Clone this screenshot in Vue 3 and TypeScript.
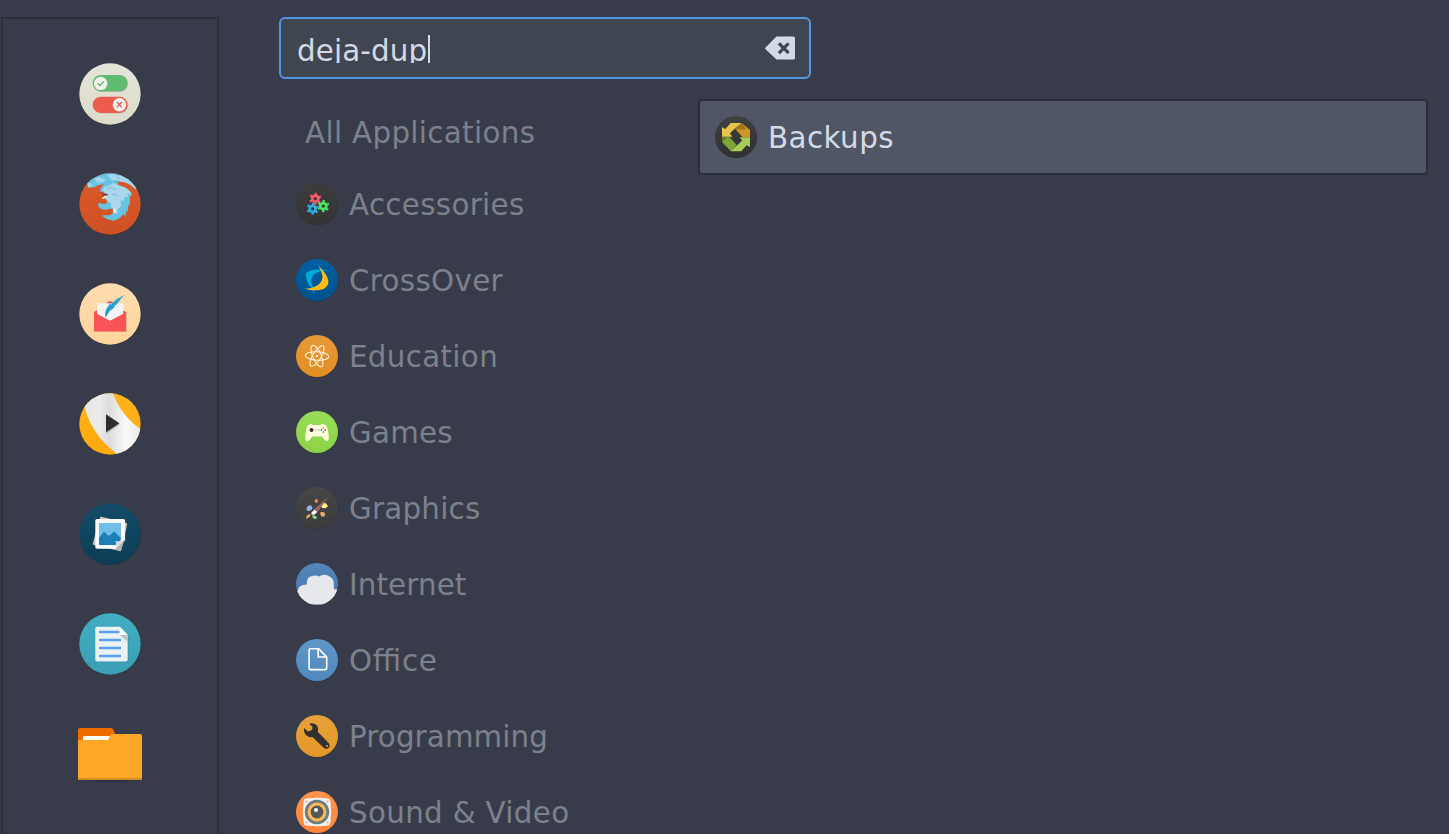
<script setup lang="ts">
import { ref } from 'vue'

interface Entry {
  id: string
  label: string
}

const query = ref('deja-dup')

const favorites: Entry[] = [
  { id: 'settings', label: 'System Settings' },
  { id: 'browser', label: 'Web Browser' },
  { id: 'mail', label: 'Mail' },
  { id: 'player', label: 'Media Player' },
  { id: 'photos', label: 'Photos' },
  { id: 'editor', label: 'Text Editor' },
  { id: 'files', label: 'Files' },
]

const categories: Entry[] = [
  { id: 'accessories', label: 'Accessories' },
  { id: 'crossover', label: 'CrossOver' },
  { id: 'education', label: 'Education' },
  { id: 'games', label: 'Games' },
  { id: 'graphics', label: 'Graphics' },
  { id: 'internet', label: 'Internet' },
  { id: 'office', label: 'Office' },
  { id: 'programming', label: 'Programming' },
  { id: 'sound', label: 'Sound & Video' },
]

const discs: Record<string, [string, string]> = {
  settings: ['#e4e4d9', '#dcdbcb'],
  browser: ['#dc5a2b', '#cd5024'],
  mail: ['#ffdcae', '#ffd49c'],
  player: ['#ffb41f', '#ffa90c'],
  photos: ['#124b68', '#0d3d54'],
  editor: ['#42aec3', '#3a9fb2'],
  accessories: ['#3c3c3c', '#333333'],
  crossover: ['#0061a3', '#00528c'],
  education: ['#e79a38', '#e18e22'],
  games: ['#98dc58', '#8bd346'],
  graphics: ['#474747', '#3b3b3b'],
  internet: ['#5486b9', '#4877ad'],
  office: ['#6096c8', '#5089bd'],
  programming: ['#e8a23c', '#e39826'],
  sound: ['#ff9350', '#ff8438'],
  backups: ['#404040', '#303030'],
}

const gears = [
  { x: 19.3, y: 15.7, color: '#fc5668' },
  { x: 27.3, y: 23.1, color: '#4ee35f' },
  { x: 16.7, y: 25.8, color: '#30a9dc' },
]
</script>

<template>
  <main class="menu">
    <svg class="defs" width="0" height="0" aria-hidden="true">
      <defs>
        <linearGradient v-for="(c, id) in discs" :id="'disc-' + id" :key="id" x1="0" y1="0" x2="0" y2="1">
          <stop offset="0" :stop-color="c[0]" />
          <stop offset="1" :stop-color="c[1]" />
        </linearGradient>
        <linearGradient id="band" x1="0" y1="0" x2="1" y2="0">
          <stop offset="0" stop-color="#e6e6e6" />
          <stop offset="0.25" stop-color="#ebebeb" />
          <stop offset="0.42" stop-color="#dcdcdc" />
          <stop offset="0.7" stop-color="#f8f8f8" />
          <stop offset="1" stop-color="#e6e6e6" />
        </linearGradient>
        <radialGradient id="folder-shadow">
          <stop offset="0" stop-color="#20222b" stop-opacity="0.9" />
          <stop offset="1" stop-color="#20222b" stop-opacity="0" />
        </radialGradient>
        <clipPath id="clip-large"><circle cx="32" cy="32" r="30.7" /></clipPath>
        <clipPath id="clip-small"><circle cx="21" cy="21" r="21" /></clipPath>
      </defs>
    </svg>

    <aside class="favorites">
      <button v-for="fav in favorites" :key="fav.id" class="favorite" :aria-label="fav.label">
        <svg class="favorite-icon" viewBox="0 0 64 64">
          <template v-if="fav.id !== 'files'">
            <circle cx="32.4" cy="32.6" r="30.7" fill="#23262f" opacity="0.55" />
            <circle cx="32" cy="32" r="30.7" :fill="`url(#disc-${fav.id})`" />
          </template>

          <g v-if="fav.id === 'settings'">
            <rect x="15.2" y="13.8" width="34.8" height="16.2" rx="8.1" fill="#b9b9a9" />
            <rect x="14.7" y="13" width="34.8" height="16.2" rx="8.1" fill="#5fbc71" />
            <circle cx="22.7" cy="21.4" r="6.7" fill="#f0f0ee" />
            <path d="M19.7 21.4l2.2 2.2 3.9-4.2" fill="none" stroke="#50b163" stroke-width="1.3" />
            <rect x="15.2" y="35.4" width="34.8" height="16.2" rx="8.1" fill="#b9b9a9" />
            <rect x="14.7" y="34.7" width="34.8" height="16.2" rx="8.1" fill="#ee5b4e" />
            <circle cx="41.4" cy="42.7" r="6.7" fill="#f0f0ee" />
            <path d="M39 40l4.7 5.4M43.7 40L39 45.4" fill="none" stroke="#e85a50" stroke-width="1.3" />
          </g>

          <g v-else-if="fav.id === 'browser'" clip-path="url(#clip-large)">
            <path
              d="M8.5 10L10 15.7L16.7 15.3L20 13.3L26 12L22.7 16L22 19.3L29.3 22.7L25.3 26L28 27.3L30 30L26.7 32L20.7 31L20 33.5Q21 36.5 26.7 38L32.7 36.7L36 37.6L35.3 40.7L32 43.3L24 43.3Q27 47.5 35 48.7Q42 47.5 45.3 42L47.3 44.7L48 39.3L49.3 40.7L50.8 32L52 32.8V24.5L54 23.3Q52 17.5 46.7 15.3L40.7 13.3L39.3 9.6Q50 9 57.6 17.4L64 12V0H0z"
              fill="#66c3e2"
            />
            <path
              d="M24.5 18L27 14.5L31 13.5L35 11L41 13.5L47 15.5Q52 18 53.5 22.8L49.5 21.5L50.3 25.5L47 24.5L45.5 29.5L42.5 28L43 34L39.5 37L39.7 41.5L36.5 41.8L34.5 39.5L36 37.6L32.7 34.5L33 31L30 30L27.5 26L30.3 22.5L26.5 20.5z"
              fill="#abd6eb"
            />
            <path
              d="M9.5 11L14 11.5L13 14.7L10.3 15zM16 6.5L22 5L25 7L29 8L25 10L20 11L18 9zM29 3L35 2L38 3.5L43 3.5L50 7L57 14.5L57.6 17.4Q50.5 9.5 42.5 9.8L38 8L34 9L32 6z"
              fill="#a3d5eb"
            />
            <path d="M29 16.5l4-1 2 1.7 4-.6M34 23l3-1 3 2M24 5l3 1.4M38 5l4 1.6M16 11.5l4-2" fill="none" stroke="#7fc9e5" stroke-width="1.3" />
            <path d="M22.3 19.2l6.7 3.2-4.6 2.7c.7-2.2-.6-4-2.1-5.9z" fill="#b73428" />
            <path d="M26 22.3l2.8-.6 1.3 1-2.4 1z" fill="#38414c" />
            <path d="M24 25.8l4.4-2.9-.1 2.8-4.2 1.2zM35 36.8l3.3.6-.8 3.6-2.2-1z" fill="#f8edc8" />
          </g>

          <g v-else-if="fav.id === 'mail'">
            <path d="M17 30.5h32v19.4H17z" fill="#dfb989" />
            <path d="M16 31q0-1.5 2-2l12-9q2-1.6 4 0l12 9q2 .5 2 2v18.3H16z" fill="#e0474f" />
            <path d="M19 22.3q0-1 1-1h24.4q1 0 1 1V40H19z" fill="#f4f4f4" />
            <path d="M16 30.2l16 8.5 16-8.5v19.1H16z" fill="#fc5359" />
            <path
              d="M27.3 35.5c-.8-7 2-11.4 6.4-14.9-.5 1.1-.6 1.5-.7 2.3 2.5-3.7 6.4-6.4 13.5-9.8-4.2 3.6-5.4 6.8-8.2 9.8l-1.7.4.4 1c-2 2.7-3.3 3.7-5.5 4.6l-.2 1.3c-1.4.8-2.3 2.5-4 5.3z"
              fill="#2fa3d4"
            />
            <path d="M28 34.5c1-5 3.4-9 8-13" fill="none" stroke="#228cbd" stroke-width=".8" />
          </g>

          <g v-else-if="fav.id === 'player'" clip-path="url(#clip-large)">
            <path d="M6.5 14.5C12 37 25 51 39.5 62.5L66 62V39C49 29 40 15 34.3 0H6z" fill="url(#band)" />
            <path d="M28.3 23.3v18.5l13.4-9.2z" fill="#b8b8b8" />
            <path d="M28 22.3v18l13.4-9z" fill="#2d2d2d" />
          </g>

          <g v-else-if="fav.id === 'photos'">
            <path d="M22 15.6q.3-1 1.5-.8l24.4 6q1.6.4 1.3 1.7L43.3 48q-.4 1.5-1.8 1.1l-25.7-6q-1.4-.4-1-1.7z" fill="#c4c2c1" />
            <path
              d="M19 17h26.3q1.8 0 1.8 1.8v19.5l-9 8.4H19.1q-1.8 0-1.8-1.8V18.8Q17.3 17 19 17z"
              fill="#fbfbfb"
            />
            <path d="M21 21h22v16.5L37.5 43H21z" fill="#6fbfe9" />
            <path d="M21 36l5-6.6 3.8 3.9 1.8.2 4.4-4.3 7 7v1.5L37.5 43H21z" fill="#1a80b7" />
            <path d="M47.1 37.5l-9.4 9.2q1.5-3.8-.3-7.8 4 1.3 9.7-1.4z" fill="#dcdbda" />
            <path d="M47.1 37.5l-4.4 11-5-1.8z" fill="#aaa9a8" opacity=".65" />
          </g>

          <g v-else-if="fav.id === 'editor'">
            <path d="M19 16h23l8.4 8v24.3q0 1.7-1.7 1.7H18.5z" fill="#2e8799" />
            <path d="M19 14.8h22.7l8 8.2v24.8q0 1.7-1.7 1.7H19q-1.7 0-1.7-1.7V16.5q0-1.7 1.7-1.7z" fill="#eaf3f4" />
            <path d="M41.7 14.8V23h8z" fill="#fff" />
            <path d="M41.7 23h8v7z" fill="#b9c6c8" />
            <path d="M21 20h20.4M21 28h22M21 36h22M21 44h22" fill="none" stroke="#5b9ff0" stroke-width="2.7" />
          </g>

          <g v-else>
            <ellipse cx="32" cy="58" rx="29" ry="3" fill="url(#folder-shadow)" />
            <path d="M0 18V8q0-2 2-2h31q1.3 0 2 1.3L37.5 13V20H0z" fill="#ef6c00" />
            <path d="M5 14h29v5H5z" fill="#fffdf8" />
            <path d="M0 18h30.3l2-5q.5-1 1.7-1h28q2 0 2 2v44H0z" fill="#ffa828" />
            <path d="M0 56h64v2H0z" fill="#d58d23" />
          </g>
        </svg>
      </button>
    </aside>

    <section class="content">
      <label class="search">
        <span class="search-text">{{ query }}<i class="caret"></i></span>
        <svg class="clear" viewBox="0 0 30 24">
          <path d="M11.5.6H28.5Q30 .6 30 2.1V22.1Q30 23.6 28.5 23.6H11.5L.3 12.9Q-.2 12.3 .3 11.7z" fill="#d3dae3" />
          <path d="M15 8.4l7.5 7.5M22.5 8.4l-7.5 7.5" fill="none" stroke="#414751" stroke-width="3.2" stroke-linecap="square" />
        </svg>
      </label>

      <div class="columns">
        <nav class="categories">
          <div class="category all">All Applications</div>
          <div v-for="cat in categories" :key="cat.id" class="category" :class="cat.id">
            <svg class="icon" viewBox="0 0 42 42">
              <circle cx="21.4" cy="21.5" r="21" fill="#252831" opacity="0.5" />
              <circle cx="21" cy="21" r="21" :fill="`url(#disc-${cat.id})`" />

              <g v-if="cat.id === 'accessories'" fill="none">
                <g v-for="gear in gears" :key="gear.color" :stroke="gear.color">
                  <circle :cx="gear.x" :cy="gear.y" r="3" stroke-width="2.8" />
                  <circle
                    :cx="gear.x" :cy="gear.y" r="4.8" stroke-width="2.5" stroke-dasharray="2.1 2.9265"
                    :transform="`rotate(78 ${gear.x} ${gear.y})`"
                  />
                </g>
              </g>

              <g v-else-if="cat.id === 'crossover'">
                <path d="M32.5 11.2C26 10 14 9.5 9.8 14.4c.3 6 2.1 11.4 6.2 14.7.3 2.2 1 4 2.8 6.2-.9-2.8-1.2-4-.9-5.8-3.5-5.2-3.1-9.9-.6-13.4 4.2-4.2 9-4.4 15.2-4.9z" fill="#00aadb" />
                <path d="M22.5 6c1.8 3.8 6.9 7 9 13 3.5 8-3.8 12.6-11.5 12.3-4 0-8-.5-11.3-1.8 12 .5 20.3-7 17.1-15-.7-3.2-2.5-5.5-3.3-8.5z" fill="#ffbd15" />
              </g>

              <g v-else-if="cat.id === 'education'" fill="none" stroke="#fff8e8" stroke-width="1">
                <ellipse cx="21" cy="21" rx="11.8" ry="4.2" transform="rotate(3 21 21)" />
                <ellipse cx="21" cy="21" rx="11.5" ry="4.2" transform="rotate(67 21 21)" />
                <ellipse cx="21" cy="21" rx="11.8" ry="4.2" transform="rotate(121 21 21)" />
                <circle cx="21" cy="21" r="1.2" fill="#fff8e8" stroke="none" />
              </g>

              <g v-else-if="cat.id === 'games'">
                <path
                  d="M13.2 13.6q2.2-1.3 3.8.4h7.6q1.8-1.6 4-.4 2.7.8 3.6 7.4 1.5 8.6-1 9.2-1.8.4-5.2-4.6h-9.8q-3.2 5.2-5.3 4.8-2.5-.6-1.1-9.4.9-6.6 3.4-7.4z"
                  fill="#fbfddd"
                />
                <circle cx="15.5" cy="19" r="2" fill="#333" />
                <path d="M19 19h5.6" stroke="#a8a99b" stroke-dasharray="1.4 .5" />
                <circle cx="27.3" cy="17" r=".9" fill="#f3b13c" />
                <circle cx="29.2" cy="19" r=".9" fill="#e94c4c" />
                <circle cx="27.3" cy="21" r=".9" fill="#4abf58" />
                <circle cx="25.4" cy="19" r=".9" fill="#3c91df" />
              </g>

              <g v-else-if="cat.id === 'graphics'">
                <ellipse cx="20.3" cy="14" rx="1.7" ry="2.1" fill="#f27c60" transform="rotate(15 20.3 14)" />
                <ellipse cx="13.4" cy="21.2" rx="3" ry="2.5" fill="#91b5e3" transform="rotate(-35 13.4 21.2)" />
                <path d="M24.8 18.8l2-2.8 3.2.3 2 3-2.6 2-3.2-.3z" fill="#f9f184" />
                <path d="M24.1 25.5l3-.7 2.2 2-1 2.6-3.1.2z" fill="#eeb15d" />
                <path d="M16 28.2l3 .2 2.2 2-1.4 1.7-2.8-.7z" fill="#83d893" />
                <path d="M32.2 10L21.6 25l-3.3-2.7z" fill="#9d675f" />
                <path d="M18.3 22.5l3.1 2.4-3.1 2.8-3-.3.3-1.8z" fill="#f6f6f6" />
                <path d="M14.8 27.2l-1.3 2.7-3.3 2.2.3-2.8q1.2-2.5 4.3-2.1z" fill="#eeb15d" />
              </g>

              <g v-else-if="cat.id === 'internet'" clip-path="url(#clip-small)">
                <path d="M0 28h1.6q.7-6.2 9.2-6.5-.8-8 6.5-8.8 3-.7 6 .7 4-3 8.5-.9 6.2 2.4 6 8.5-.3 2.9.2 5.2l4 .2v15H0z" fill="#e6e8ec" />
              </g>

              <g v-else-if="cat.id === 'office'" fill="none" stroke="#fff" stroke-width="1.6" stroke-linejoin="round">
                <path d="M14.3 9.8h8.4l8 8.3v11q0 1.5-1.5 1.5H14.6q-1.5 0-1.5-1.5V11.3q0-1.5 1.2-1.5z" />
                <path d="M22.2 10v8h8.5" stroke-linejoin="miter" />
              </g>

              <g v-else-if="cat.id === 'programming'">
                <path
                  d="M13.2 8.7q4-1.4 7.3 1.4 2.5 3 1.2 6.6l11.1 11.5q1.8 2 .2 4.3-2.2 2.2-4.7.7L16.4 21.9q-3.3.9-6.1-1.6-3-3-2.1-7.4l3.4 3.3q2.8.4 4.5-1.7.6-1.4.3-2.8z"
                  fill="#303030"
                />
                <circle cx="31" cy="31" r="1.1" fill="#e89e31" />
              </g>

              <g v-else>
                <path d="M10 7.6q11-1.6 22 0 2.2.2 2.4 2.4 1.6 11 0 22-.2 2.2-2.4 2.4-11 1.6-22 0-2.2-.2-2.4-2.4-1.6-11 0-22 .2-2.2 2.4-2.4z" fill="#eff0f1" />
                <g fill="#f3a778">
                  <circle cx="10.6" cy="10.6" r="1" />
                  <circle cx="31.4" cy="10.6" r="1" />
                  <circle cx="10.6" cy="31.4" r="1" />
                  <circle cx="31.4" cy="31.4" r="1" />
                </g>
                <circle cx="21" cy="21" r="12.2" fill="#6a7c7e" />
                <circle cx="21" cy="21" r="9.4" fill="#ffba56" />
                <circle cx="21" cy="21" r="6.4" fill="#555759" />
                <circle cx="20" cy="19.1" r="2" fill="#fff" />
              </g>
            </svg>
            <span>{{ cat.label }}</span>
          </div>
        </nav>

        <div class="results">
          <div class="result">
            <svg class="icon" viewBox="0 0 42 42">
              <circle cx="21.3" cy="21.4" r="21" fill="#343741" opacity=".5" />
              <circle cx="21" cy="21" r="21" fill="url(#disc-backups)" />
              <path d="M7 11.3l3.4 1.7L15.7 7h11L18 14.3 14.8 17.6l2.7 3.2H7z" fill="#e6c54a" />
              <path d="M26.7 7l4 6.2H19z" fill="#a0741d" />
              <path d="M26.7 7L35 14v7h-7.5L20.5 13.2h10.2z" fill="#cd9726" />
              <path d="M7 21h5l-5 5z" fill="#5c8128" />
              <path d="M12 21h2.5l7.2 8-6 6L7 26z" fill="#7ea537" />
              <path d="M35 30.9L31.6 29.2 26.3 35.2h-11L23.5 27.9 27.2 24.6 24.5 21.2H35z" fill="#a9cb58" />
            </svg>
            <span>Backups</span>
          </div>
        </div>
      </div>
    </section>
  </main>
</template>

<style>
body {
  margin: 0;
  background: #383c4a;
}
</style>

<style scoped>
.menu {
  box-sizing: border-box;
  width: 1449px;
  height: 834px;
  padding: 17px 0 0 1px;
  overflow: hidden;
  display: flex;
  gap: 60px;
  background: #383c4a;
  border-bottom: 1px solid #333642;
  color: #7c818c;
  font: 29.33px/42px "DejaVu Sans", sans-serif;
  font-feature-settings: "liga" 1;
  letter-spacing: 0.34px;
}

.defs {
  position: absolute;
}

.favorites {
  box-sizing: border-box;
  flex: none;
  width: 218px;
  height: 900px;
  padding-top: 43px;
  border: 2px solid #2b2e39;
  display: flex;
  flex-direction: column;
  align-items: center;
  gap: 46px;
}

.favorite {
  flex: none;
  width: 64px;
  height: 64px;
  padding: 0;
  border: 0;
  background: none;
}

.favorite-icon {
  display: block;
  width: 64px;
  height: 64px;
  overflow: visible;
}

.content {
  flex: 1;
  min-width: 0;
}

.search {
  box-sizing: border-box;
  width: 532px;
  height: 62px;
  padding: 0 14px 0 16px;
  border: 2px solid #5294e2;
  border-radius: 6px;
  display: flex;
  align-items: center;
  justify-content: space-between;
  background: #404651;
  color: #d3dae3;
  letter-spacing: 0.12px;
}

.search-text {
  display: flex;
  height: 28px;
  margin-top: 2px;
  overflow: hidden;
  line-height: 33px;
}

.caret {
  width: 2px;
  height: 28px;
  margin-left: 1px;
  background: #d3dae3;
}

.clear {
  width: 30px;
  height: 24px;
}

.columns {
  display: flex;
  padding: 20px 21px 0 0;
}

.categories {
  width: 419px;
}

.category {
  display: flex;
  align-items: center;
  gap: 11px;
  height: 76px;
  padding-left: 17px;
}

.category span,
.result span {
  padding-top: 1px;
}

.category.all {
  height: 67px;
  padding-left: 26px;
}

.category.games,
.category.graphics {
  letter-spacing: 0.24px;
}

.category.internet,
.category.programming {
  letter-spacing: 0.12px;
}

.category.office {
  letter-spacing: 0.75px;
}

.icon {
  flex: none;
  width: 42px;
  height: 42px;
  overflow: visible;
}

.results {
  flex: 1;
}

.result {
  box-sizing: border-box;
  height: 76px;
  padding-left: 15px;
  border: 2px solid #2b2e39;
  border-radius: 4px;
  display: flex;
  align-items: center;
  gap: 11px;
  background: #505666;
  color: #d3dae3;
  letter-spacing: 0.45px;
}
</style>
